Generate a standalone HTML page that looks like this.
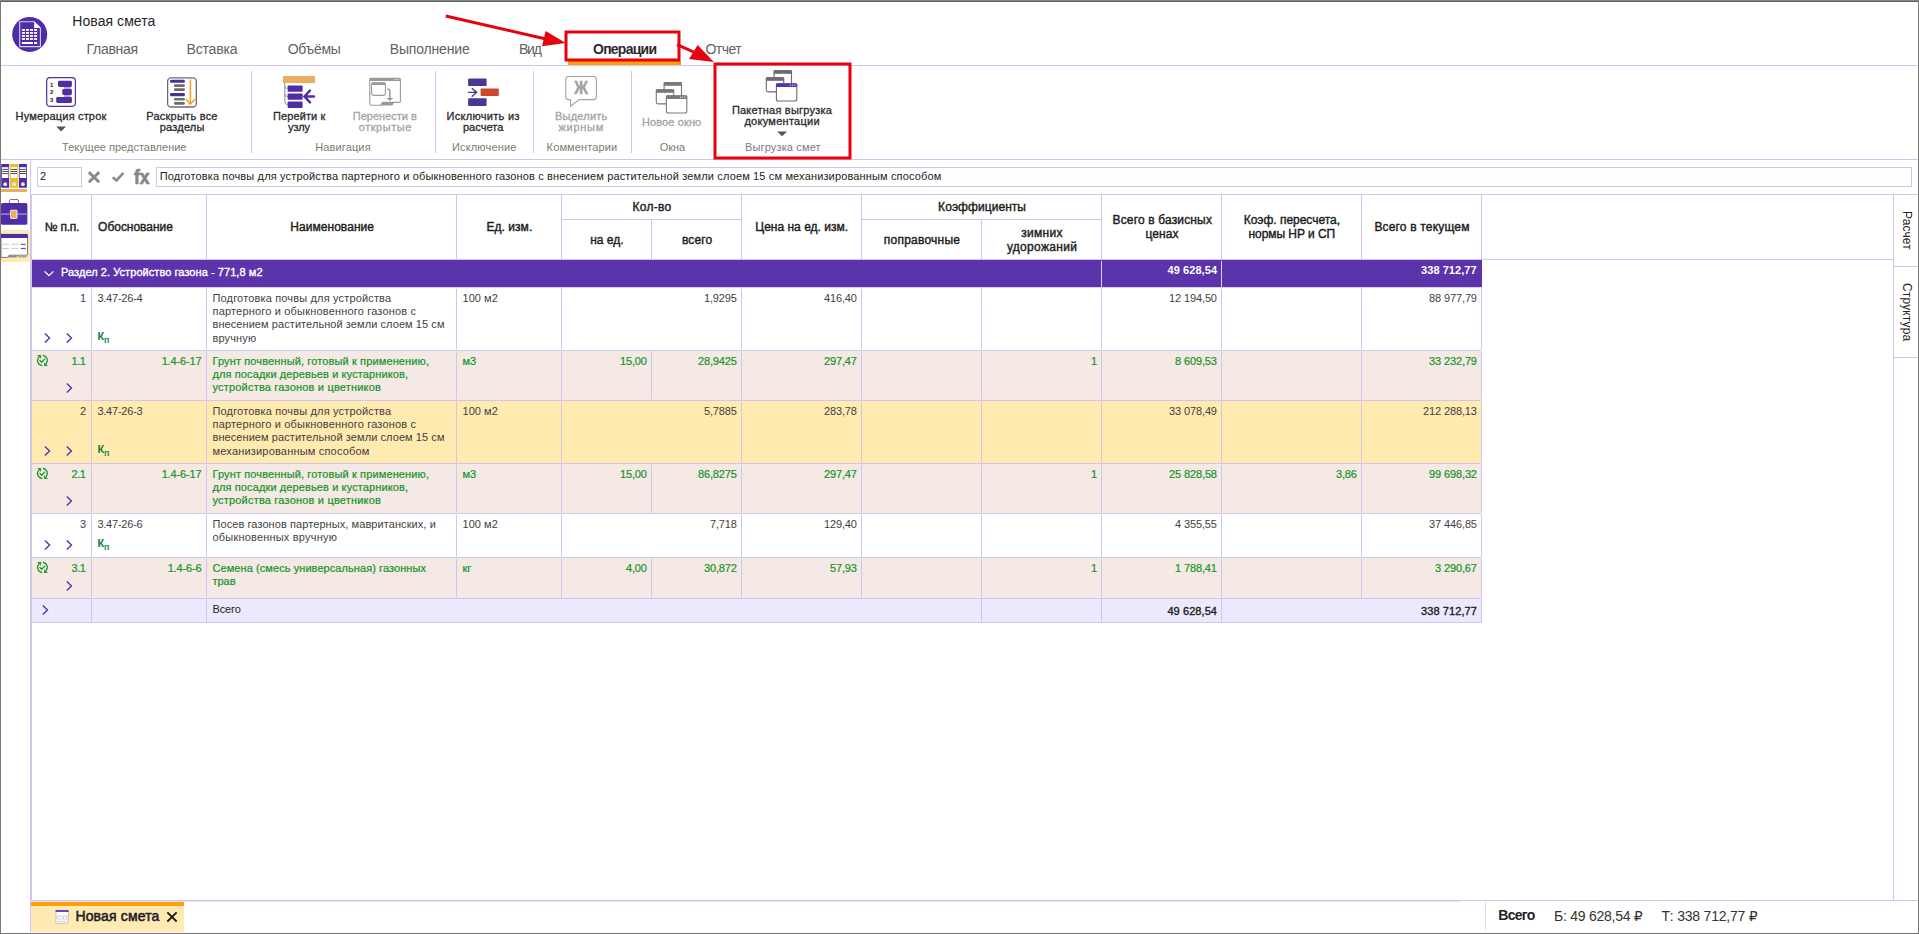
<!DOCTYPE html>
<html lang="ru"><head><meta charset="utf-8"><title>Новая смета</title>
<style>
*{box-sizing:border-box;margin:0;padding:0}
html,body{width:1919px;height:934px;overflow:hidden;background:#fff}
body{position:relative;font-family:"Liberation Sans","DejaVu Sans",sans-serif;color:#333;font-size:11px}
.a{position:absolute}
.t{position:absolute;white-space:nowrap;line-height:20px;height:20px}
.b{font-weight:bold}
.m{-webkit-text-stroke:0.35px currentColor}
.hl{position:absolute;height:1px;background:#d0c5ec}
.vl{position:absolute;width:1px;background:#d0c5ec}
.vg{box-shadow:0 1px 0 0 rgba(208,197,236,.45),0 -1px 0 0 rgba(208,197,236,.45)}
.tab{font-size:14px;color:#626262}
.rb{font-size:11px;color:#2a2a2a;-webkit-text-stroke:0.3px currentColor}
.rbd{font-size:11px;color:#a4a4a4;-webkit-text-stroke:0.3px currentColor}
.gl{font-size:11px;color:#7a7a7a}
.th{font-size:12px;color:#1c1c1c;-webkit-text-stroke:0.4px currentColor}
.d{font-size:11px;color:#3f3f3f}
.g{font-size:11px;color:#17952a;-webkit-text-stroke:0.22px currentColor}
svg{position:absolute;overflow:visible}
</style></head>
<body>
<div class="a" style="left:0;top:0;width:1px;height:934px;background:#787878"></div>
<div class="a" style="left:1918px;top:0;width:1px;height:934px;background:#787878"></div>
<div class="a" style="left:0;top:0;width:1919px;height:1px;background:#868686"></div>
<div class="a" style="left:1px;top:1px;width:1917px;height:1px;background:#5d5e62"></div>
<div class="a" style="left:0;top:933px;width:1919px;height:1px;background:#717171"></div>
<div class="t" style="left:72.30px;top:11.0px;font-size:14px;letter-spacing:0.058px;color:#262626">Новая смета</div>
<div class="t tab" style="left:86.50px;top:39.0px;letter-spacing:-0.283px">Главная</div>
<div class="t tab" style="left:186.50px;top:39.0px;letter-spacing:-0.174px">Вставка</div>
<div class="t tab" style="left:287.75px;top:39.0px;letter-spacing:-0.304px">Объёмы</div>
<div class="t tab" style="left:389.75px;top:39.0px;letter-spacing:-0.165px">Выполнение</div>
<div class="t tab" style="left:518.90px;top:39.0px;letter-spacing:-1.114px">Вид</div>
<div class="t tab" style="left:705.50px;top:39.0px;letter-spacing:-0.536px">Отчет</div>
<div class="t  b" style="left:593.00px;top:39.0px;font-size:14px;letter-spacing:-0.757px;color:#2b2b2b">Операции</div>
<div class="hl" style="left:1px;top:65px;width:1917px"></div>
<div class="hl" style="left:1px;top:159px;width:1917px"></div>
<div class="vl" style="left:251px;top:71px;height:82px"></div>
<div class="vl" style="left:435px;top:71px;height:82px"></div>
<div class="vl" style="left:533px;top:71px;height:82px"></div>
<div class="vl" style="left:631px;top:71px;height:82px"></div>
<div class="a" style="left:568px;top:61px;width:113px;height:4px;background:#ff9f0a"></div>
<div class="t rb" style="left:15.60px;top:106.0px;letter-spacing:0.169px">Нумерация строк</div>
<div class="t rb" style="left:146.25px;top:106.0px;letter-spacing:0.241px">Раскрыть все</div>
<div class="t rb" style="left:159.75px;top:117.0px;letter-spacing:0.205px">разделы</div>
<div class="t rb" style="left:273.10px;top:106.0px;letter-spacing:0.085px">Перейти к</div>
<div class="t rb" style="left:288.10px;top:117.0px;letter-spacing:-0.148px">узлу</div>
<div class="t rbd" style="left:352.75px;top:106.0px;letter-spacing:0.010px">Перенести в</div>
<div class="t rbd" style="left:358.75px;top:117.0px;letter-spacing:0.527px">открытые</div>
<div class="t rb" style="left:446.60px;top:106.0px;letter-spacing:0.293px">Исключить из</div>
<div class="t rb" style="left:462.90px;top:117.0px;letter-spacing:0.077px">расчета</div>
<div class="t rbd" style="left:555.00px;top:106.0px;letter-spacing:0.214px">Выделить</div>
<div class="t rbd" style="left:558.50px;top:117.0px;letter-spacing:0.716px">жирным</div>
<div class="t rbd" style="left:641.90px;top:112.0px;letter-spacing:0.127px">Новое окно</div>
<div class="t rb" style="left:731.90px;top:100.0px;letter-spacing:0.223px">Пакетная выгрузка</div>
<div class="t rb" style="left:744.40px;top:111.0px;letter-spacing:0.270px">документации</div>
<div class="t gl" style="left:62.10px;top:137.0px;letter-spacing:0.008px">Текущее представление</div>
<div class="t gl" style="left:315.25px;top:137.0px;letter-spacing:0.126px">Навигация</div>
<div class="t gl" style="left:451.90px;top:137.0px;letter-spacing:0.170px">Исключение</div>
<div class="t gl" style="left:546.60px;top:137.0px;letter-spacing:0.135px">Комментарии</div>
<div class="t gl" style="left:659.75px;top:137.0px;letter-spacing:-0.104px">Окна</div>
<div class="t gl" style="left:745.00px;top:137.0px;letter-spacing:0.144px">Выгрузка смет</div>
<div class="a" style="left:37px;top:167px;width:45px;height:20px;border:1px solid #d0c5ec"></div>
<div class="t" style="left:40.10px;top:166.0px;font-size:11px;color:#222">2</div>
<div class="a" style="left:156px;top:167px;width:1756px;height:20px;border:1px solid #d0c5ec"></div>
<div class="t" style="left:159.80px;top:166.0px;font-size:11px;letter-spacing:0.147px;color:#222">Подготовка почвы для устройства партерного и обыкновенного газонов с внесением растительной земли слоем 15 см механизированным способом</div>
<div class="t b" style="left:133.6px;top:166.5px;font-size:20px;color:#868686;-webkit-text-stroke:0.7px #868686;transform:scaleX(0.88);transform-origin:0 0">fx</div>
<div class="vl" style="left:30px;top:160px;height:772px"></div>
<div class="vl" style="left:31px;top:194px;height:707px"></div>
<div class="hl" style="left:31px;top:194px;width:1887px"></div>
<div class="hl" style="left:31px;top:900px;width:1887px"></div>
<div class="vl" style="left:1893px;top:195px;height:706px"></div>
<div class="hl" style="left:1894px;top:266px;width:24px"></div>
<div class="hl" style="left:1894px;top:357px;width:24px"></div>
<div class="a" style="left:32px;top:351px;width:1449px;height:49px;background:#f5e9e6"></div>
<div class="a" style="left:32px;top:401px;width:1449px;height:62px;background:#ffeab0"></div>
<div class="a" style="left:32px;top:464px;width:1449px;height:49px;background:#f5e9e6"></div>
<div class="a" style="left:32px;top:558px;width:1449px;height:40px;background:#f5e9e6"></div>
<div class="a" style="left:32px;top:599px;width:1449px;height:23px;background:#ece8fd"></div>
<div class="hl" style="left:31px;top:259px;width:1862px"></div>
<div class="a" style="left:32px;top:260px;width:1450px;height:27px;background:#5b34ac"></div>
<div class="hl" style="left:31px;top:350px;width:1451px"></div>
<div class="hl" style="left:31px;top:400px;width:1451px"></div>
<div class="hl" style="left:31px;top:463px;width:1451px"></div>
<div class="hl" style="left:31px;top:513px;width:1451px"></div>
<div class="hl" style="left:31px;top:557px;width:1451px"></div>
<div class="hl" style="left:31px;top:598px;width:1451px"></div>
<div class="hl" style="left:31px;top:622px;width:1451px"></div>
<div class="hl" style="left:561px;top:219px;width:180px"></div>
<div class="hl" style="left:861px;top:219px;width:240px"></div>
<div class="vl" style="left:91px;top:195px;height:64px"></div>
<div class="vl" style="left:206px;top:195px;height:64px"></div>
<div class="vl" style="left:456px;top:195px;height:64px"></div>
<div class="vl" style="left:561px;top:195px;height:64px"></div>
<div class="vl" style="left:651px;top:220px;height:39px"></div>
<div class="vl" style="left:741px;top:195px;height:64px"></div>
<div class="vl" style="left:861px;top:195px;height:64px"></div>
<div class="vl" style="left:981px;top:220px;height:39px"></div>
<div class="vl" style="left:1101px;top:195px;height:64px"></div>
<div class="vl" style="left:1221px;top:195px;height:64px"></div>
<div class="vl" style="left:1361px;top:195px;height:64px"></div>
<div class="vl" style="left:1481px;top:195px;height:64px"></div>
<div class="vl" style="left:1101px;top:261px;height:26px;background:#d9d0f2"></div>
<div class="vl" style="left:1221px;top:261px;height:26px;background:#d9d0f2"></div>
<div class="hl" style="left:32px;top:287px;width:1450px;background:#ddd4f3"></div>
<div class="vl vg" style="left:91px;top:289px;height:60px"></div>
<div class="vl vg" style="left:206px;top:289px;height:60px"></div>
<div class="vl vg" style="left:456px;top:289px;height:60px"></div>
<div class="vl vg" style="left:561px;top:289px;height:60px"></div>
<div class="vl vg" style="left:741px;top:289px;height:60px"></div>
<div class="vl vg" style="left:861px;top:289px;height:60px"></div>
<div class="vl vg" style="left:981px;top:289px;height:60px"></div>
<div class="vl vg" style="left:1101px;top:289px;height:60px"></div>
<div class="vl vg" style="left:1221px;top:289px;height:60px"></div>
<div class="vl vg" style="left:1361px;top:289px;height:60px"></div>
<div class="vl vg" style="left:1481px;top:289px;height:60px"></div>
<div class="vl vg" style="left:91px;top:352px;height:47px"></div>
<div class="vl vg" style="left:206px;top:352px;height:47px"></div>
<div class="vl vg" style="left:456px;top:352px;height:47px"></div>
<div class="vl vg" style="left:561px;top:352px;height:47px"></div>
<div class="vl vg" style="left:651px;top:352px;height:47px"></div>
<div class="vl vg" style="left:741px;top:352px;height:47px"></div>
<div class="vl vg" style="left:861px;top:352px;height:47px"></div>
<div class="vl vg" style="left:981px;top:352px;height:47px"></div>
<div class="vl vg" style="left:1101px;top:352px;height:47px"></div>
<div class="vl vg" style="left:1221px;top:352px;height:47px"></div>
<div class="vl vg" style="left:1361px;top:352px;height:47px"></div>
<div class="vl vg" style="left:1481px;top:352px;height:47px"></div>
<div class="vl vg" style="left:91px;top:402px;height:60px"></div>
<div class="vl vg" style="left:206px;top:402px;height:60px"></div>
<div class="vl vg" style="left:456px;top:402px;height:60px"></div>
<div class="vl vg" style="left:561px;top:402px;height:60px"></div>
<div class="vl vg" style="left:741px;top:402px;height:60px"></div>
<div class="vl vg" style="left:861px;top:402px;height:60px"></div>
<div class="vl vg" style="left:981px;top:402px;height:60px"></div>
<div class="vl vg" style="left:1101px;top:402px;height:60px"></div>
<div class="vl vg" style="left:1221px;top:402px;height:60px"></div>
<div class="vl vg" style="left:1361px;top:402px;height:60px"></div>
<div class="vl vg" style="left:1481px;top:402px;height:60px"></div>
<div class="vl vg" style="left:91px;top:465px;height:47px"></div>
<div class="vl vg" style="left:206px;top:465px;height:47px"></div>
<div class="vl vg" style="left:456px;top:465px;height:47px"></div>
<div class="vl vg" style="left:561px;top:465px;height:47px"></div>
<div class="vl vg" style="left:651px;top:465px;height:47px"></div>
<div class="vl vg" style="left:741px;top:465px;height:47px"></div>
<div class="vl vg" style="left:861px;top:465px;height:47px"></div>
<div class="vl vg" style="left:981px;top:465px;height:47px"></div>
<div class="vl vg" style="left:1101px;top:465px;height:47px"></div>
<div class="vl vg" style="left:1221px;top:465px;height:47px"></div>
<div class="vl vg" style="left:1361px;top:465px;height:47px"></div>
<div class="vl vg" style="left:1481px;top:465px;height:47px"></div>
<div class="vl vg" style="left:91px;top:515px;height:41px"></div>
<div class="vl vg" style="left:206px;top:515px;height:41px"></div>
<div class="vl vg" style="left:456px;top:515px;height:41px"></div>
<div class="vl vg" style="left:561px;top:515px;height:41px"></div>
<div class="vl vg" style="left:741px;top:515px;height:41px"></div>
<div class="vl vg" style="left:861px;top:515px;height:41px"></div>
<div class="vl vg" style="left:981px;top:515px;height:41px"></div>
<div class="vl vg" style="left:1101px;top:515px;height:41px"></div>
<div class="vl vg" style="left:1221px;top:515px;height:41px"></div>
<div class="vl vg" style="left:1361px;top:515px;height:41px"></div>
<div class="vl vg" style="left:1481px;top:515px;height:41px"></div>
<div class="vl vg" style="left:91px;top:559px;height:38px"></div>
<div class="vl vg" style="left:206px;top:559px;height:38px"></div>
<div class="vl vg" style="left:456px;top:559px;height:38px"></div>
<div class="vl vg" style="left:561px;top:559px;height:38px"></div>
<div class="vl vg" style="left:651px;top:559px;height:38px"></div>
<div class="vl vg" style="left:741px;top:559px;height:38px"></div>
<div class="vl vg" style="left:861px;top:559px;height:38px"></div>
<div class="vl vg" style="left:981px;top:559px;height:38px"></div>
<div class="vl vg" style="left:1101px;top:559px;height:38px"></div>
<div class="vl vg" style="left:1221px;top:559px;height:38px"></div>
<div class="vl vg" style="left:1361px;top:559px;height:38px"></div>
<div class="vl vg" style="left:1481px;top:559px;height:38px"></div>
<div class="vl" style="left:91px;top:599px;height:23px"></div>
<div class="vl" style="left:206px;top:599px;height:23px"></div>
<div class="vl" style="left:981px;top:599px;height:23px"></div>
<div class="vl" style="left:1101px;top:599px;height:23px"></div>
<div class="vl" style="left:1221px;top:599px;height:23px"></div>
<div class="vl" style="left:1481px;top:599px;height:23px"></div>
<div class="t th" style="left:44.75px;top:217.0px;letter-spacing:-0.245px">№ п.п.</div>
<div class="t th" style="left:98.10px;top:217.0px;letter-spacing:-0.031px">Обоснование</div>
<div class="t th" style="left:290.25px;top:217.0px;letter-spacing:0.051px">Наименование</div>
<div class="t th" style="left:486.50px;top:217.0px;letter-spacing:0.040px">Ед. изм.</div>
<div class="t th" style="left:632.50px;top:197.0px;letter-spacing:0.287px">Кол-во</div>
<div class="t th" style="left:590.25px;top:230.0px;letter-spacing:-0.028px">на ед.</div>
<div class="t th" style="left:681.90px;top:230.0px;letter-spacing:0.162px">всего</div>
<div class="t th" style="left:755.25px;top:217.0px;letter-spacing:0.010px">Цена на ед. изм.</div>
<div class="t th" style="left:938.10px;top:197.0px;letter-spacing:0.061px">Коэффициенты</div>
<div class="t th" style="left:883.75px;top:230.0px;letter-spacing:0.239px">поправочные</div>
<div class="t th" style="left:1021.25px;top:223.0px;letter-spacing:0.291px">зимних</div>
<div class="t th" style="left:1006.90px;top:237.0px;letter-spacing:0.307px">удорожаний</div>
<div class="t th" style="left:1112.50px;top:210.0px;letter-spacing:0.153px">Всего в базисных</div>
<div class="t th" style="left:1145.60px;top:224.0px;letter-spacing:0.020px">ценах</div>
<div class="t th" style="left:1243.75px;top:210.0px;letter-spacing:-0.024px">Коэф. пересчета,</div>
<div class="t th" style="left:1248.50px;top:224.0px;letter-spacing:-0.064px">нормы НР и СП</div>
<div class="t th" style="left:1374.40px;top:217.0px;letter-spacing:0.172px">Всего в текущем</div>
<div class="t m" style="left:61.00px;top:262.0px;font-size:11px;letter-spacing:0.060px;color:#fff">Раздел 2. Устройство газона - 771,8 м2</div>
<div class="t  b" style="left:1167.60px;top:260.0px;font-size:11px;letter-spacing:0.058px;color:#fff">49 628,54</div>
<div class="t  b" style="left:1421.10px;top:260.0px;font-size:11px;letter-spacing:0.049px;color:#fff">338 712,77</div>
<div class="t d" style="left:79.88px;top:288.0px">1</div>
<div class="t d" style="left:97.40px;top:288.0px;letter-spacing:-0.224px">3.47-26-4</div>
<div class="t d" style="left:212.50px;top:288.0px;letter-spacing:0.159px">Подготовка почвы для устройства</div>
<div class="t d" style="left:212.50px;top:301.0px;letter-spacing:0.182px">партерного и обыкновенного газонов с</div>
<div class="t d" style="left:212.50px;top:314.0px;letter-spacing:0.071px">внесением растительной земли слоем 15 см</div>
<div class="t d" style="left:212.50px;top:328.0px;letter-spacing:0.132px">вручную</div>
<div class="t d" style="left:462.50px;top:288.0px;letter-spacing:0.050px">100 м2</div>
<div class="t d" style="left:703.94px;top:288.0px;letter-spacing:-0.120px">1,9295</div>
<div class="t d" style="left:823.94px;top:288.0px;letter-spacing:-0.120px">416,40</div>
<div class="t d" style="left:1169.02px;top:288.0px;letter-spacing:-0.120px">12 194,50</div>
<div class="t d" style="left:1429.02px;top:288.0px;letter-spacing:-0.120px">88 977,79</div>
<div class="t g" style="left:71.50px;top:351.0px;letter-spacing:-0.400px">1.1</div>
<div class="t g" style="left:161.67px;top:351.0px;letter-spacing:-0.150px">1.4-6-17</div>
<div class="t g" style="left:212.50px;top:351.0px;letter-spacing:0.126px">Грунт почвенный, готовый к применению,</div>
<div class="t g" style="left:212.50px;top:364.0px;letter-spacing:0.112px">для посадки деревьев и кустарников,</div>
<div class="t g" style="left:212.50px;top:377.0px;letter-spacing:0.195px">устройства газонов и цветников</div>
<div class="t g" style="left:462.50px;top:351.0px;letter-spacing:0.050px">м3</div>
<div class="t g" style="left:619.95px;top:351.0px;letter-spacing:-0.120px">15,00</div>
<div class="t g" style="left:697.95px;top:351.0px;letter-spacing:-0.120px">28,9425</div>
<div class="t g" style="left:823.94px;top:351.0px;letter-spacing:-0.120px">297,47</div>
<div class="t g" style="left:1090.88px;top:351.0px;letter-spacing:-0.120px">1</div>
<div class="t g" style="left:1175.01px;top:351.0px;letter-spacing:-0.120px">8 609,53</div>
<div class="t g" style="left:1429.02px;top:351.0px;letter-spacing:-0.120px">33 232,79</div>
<div class="t d" style="left:79.88px;top:401.0px">2</div>
<div class="t d" style="left:97.40px;top:401.0px;letter-spacing:-0.224px">3.47-26-3</div>
<div class="t d" style="left:212.50px;top:401.0px;letter-spacing:0.159px">Подготовка почвы для устройства</div>
<div class="t d" style="left:212.50px;top:414.0px;letter-spacing:0.182px">партерного и обыкновенного газонов с</div>
<div class="t d" style="left:212.50px;top:427.0px;letter-spacing:0.071px">внесением растительной земли слоем 15 см</div>
<div class="t d" style="left:212.50px;top:441.0px;letter-spacing:0.188px">механизированным способом</div>
<div class="t d" style="left:462.50px;top:401.0px;letter-spacing:0.050px">100 м2</div>
<div class="t d" style="left:703.94px;top:401.0px;letter-spacing:-0.120px">5,7885</div>
<div class="t d" style="left:823.94px;top:401.0px;letter-spacing:-0.120px">283,78</div>
<div class="t d" style="left:1169.02px;top:401.0px;letter-spacing:-0.120px">33 078,49</div>
<div class="t d" style="left:1423.02px;top:401.0px;letter-spacing:-0.120px">212 288,13</div>
<div class="t g" style="left:71.50px;top:464.0px;letter-spacing:-0.400px">2.1</div>
<div class="t g" style="left:161.67px;top:464.0px;letter-spacing:-0.150px">1.4-6-17</div>
<div class="t g" style="left:212.50px;top:464.0px;letter-spacing:0.126px">Грунт почвенный, готовый к применению,</div>
<div class="t g" style="left:212.50px;top:477.0px;letter-spacing:0.112px">для посадки деревьев и кустарников,</div>
<div class="t g" style="left:212.50px;top:490.0px;letter-spacing:0.195px">устройства газонов и цветников</div>
<div class="t g" style="left:462.50px;top:464.0px;letter-spacing:0.050px">м3</div>
<div class="t g" style="left:619.95px;top:464.0px;letter-spacing:-0.120px">15,00</div>
<div class="t g" style="left:697.95px;top:464.0px;letter-spacing:-0.120px">86,8275</div>
<div class="t g" style="left:823.94px;top:464.0px;letter-spacing:-0.120px">297,47</div>
<div class="t g" style="left:1090.88px;top:464.0px;letter-spacing:-0.120px">1</div>
<div class="t g" style="left:1169.02px;top:464.0px;letter-spacing:-0.120px">25 828,58</div>
<div class="t g" style="left:1335.94px;top:464.0px;letter-spacing:-0.120px">3,86</div>
<div class="t g" style="left:1429.02px;top:464.0px;letter-spacing:-0.120px">99 698,32</div>
<div class="t d" style="left:79.88px;top:514.0px">3</div>
<div class="t d" style="left:97.40px;top:514.0px;letter-spacing:-0.224px">3.47-26-6</div>
<div class="t d" style="left:212.50px;top:514.0px;letter-spacing:0.078px">Посев газонов партерных, мавританских, и</div>
<div class="t d" style="left:212.50px;top:527.0px;letter-spacing:0.195px">обыкновенных вручную</div>
<div class="t d" style="left:462.50px;top:514.0px;letter-spacing:0.050px">100 м2</div>
<div class="t d" style="left:709.95px;top:514.0px;letter-spacing:-0.120px">7,718</div>
<div class="t d" style="left:823.94px;top:514.0px;letter-spacing:-0.120px">129,40</div>
<div class="t d" style="left:1175.01px;top:514.0px;letter-spacing:-0.120px">4 355,55</div>
<div class="t d" style="left:1429.02px;top:514.0px;letter-spacing:-0.120px">37 446,85</div>
<div class="t g" style="left:71.50px;top:558.0px;letter-spacing:-0.400px">3.1</div>
<div class="t g" style="left:167.64px;top:558.0px;letter-spacing:-0.150px">1.4-6-6</div>
<div class="t g" style="left:212.50px;top:558.0px;letter-spacing:0.075px">Семена (смесь универсальная) газонных</div>
<div class="t g" style="left:212.50px;top:571.0px;letter-spacing:-0.042px">трав</div>
<div class="t g" style="left:462.50px;top:558.0px;letter-spacing:0.050px">кг</div>
<div class="t g" style="left:625.94px;top:558.0px;letter-spacing:-0.120px">4,00</div>
<div class="t g" style="left:703.94px;top:558.0px;letter-spacing:-0.120px">30,872</div>
<div class="t g" style="left:829.95px;top:558.0px;letter-spacing:-0.120px">57,93</div>
<div class="t g" style="left:1090.88px;top:558.0px;letter-spacing:-0.120px">1</div>
<div class="t g" style="left:1175.01px;top:558.0px;letter-spacing:-0.120px">1 788,41</div>
<div class="t g" style="left:1435.01px;top:558.0px;letter-spacing:-0.120px">3 290,67</div>
<div class="t" style="left:212.50px;top:599.0px;font-size:11px;letter-spacing:-0.111px;color:#222">Всего</div>
<div class="t m" style="left:1167.40px;top:601.0px;font-size:11px;letter-spacing:0.083px;color:#1c1c1c">49 628,54</div>
<div class="t m" style="left:1421.00px;top:601.0px;font-size:11px;letter-spacing:0.093px;color:#1c1c1c">338 712,77</div>
<div class="t  b" style="left:97.40px;top:326.0px;font-size:11px;color:#0f7f3b">К</div>
<div class="t  b" style="left:103.90px;top:330.0px;font-size:9px;color:#2a8f52">п</div>
<div class="t  b" style="left:97.40px;top:439.0px;font-size:11px;color:#0f7f3b">К</div>
<div class="t  b" style="left:103.90px;top:443.0px;font-size:9px;color:#2a8f52">п</div>
<div class="t  b" style="left:97.40px;top:533.0px;font-size:11px;color:#0f7f3b">К</div>
<div class="t  b" style="left:103.90px;top:537.0px;font-size:9px;color:#2a8f52">п</div>
<div class="a" style="left:1899px;top:210.5px;font-size:12px;line-height:15px;color:#222;writing-mode:vertical-rl;white-space:nowrap;letter-spacing:0.1px">Расчет</div>
<div class="a" style="left:1899px;top:282.5px;font-size:12px;line-height:15px;color:#222;writing-mode:vertical-rl;white-space:nowrap;letter-spacing:0.15px">Структура</div>
<div class="hl" style="left:32px;top:901px;width:1428px;background:#e6e6ea"></div>
<div class="a" style="left:31px;top:902px;width:153px;height:30px;background:#feeab2"></div>
<div class="a" style="left:31px;top:902px;width:153px;height:4px;background:#ff9f0a"></div>
<div class="t" style="left:75.40px;top:906.0px;font-size:14px;letter-spacing:0.158px;color:#1e1e2a;-webkit-text-stroke:0.55px #1e1e2a">Новая смета</div>
<div class="vl" style="left:1485px;top:902px;height:28px;background:#dcdcdc"></div>
<div class="t  b" style="left:1498.25px;top:905.3px;font-size:14px;letter-spacing:-0.723px;color:#222">Всего</div>
<div class="t" style="left:1554.00px;top:906.0px;font-size:14px;letter-spacing:-0.254px;color:#333">Б: 49 628,54 ₽</div>
<div class="t" style="left:1661.50px;top:906.0px;font-size:14px;letter-spacing:-0.211px;color:#333">Т: 338 712,77 ₽</div>
<svg width="1919" height="934" viewBox="0 0 1919 934" style="left:0;top:0;pointer-events:none" font-family="Liberation Sans, sans-serif">
<circle cx="29.7" cy="34.4" r="17.5" fill="#4f2da6"/>
<path d="M19.7 21.7 H34.2 L40.4 28 V46.6 H19.7 Z" fill="none" stroke="#d9cff2" stroke-width="1.1"/>
<path d="M34.2 21.7 L40.4 28 H34.2 Z" fill="#fff"/>
<rect x="21.90" y="29.00" width="3.1" height="1.8" fill="#fff"/>
<rect x="25.93" y="29.00" width="3.1" height="1.8" fill="#fff"/>
<rect x="29.96" y="29.00" width="3.1" height="1.8" fill="#fff"/>
<rect x="33.99" y="29.00" width="3.1" height="1.8" fill="#fff"/>
<rect x="21.90" y="32.03" width="3.1" height="1.8" fill="#fff"/>
<rect x="25.93" y="32.03" width="3.1" height="1.8" fill="#fff"/>
<rect x="29.96" y="32.03" width="3.1" height="1.8" fill="#fff"/>
<rect x="33.99" y="32.03" width="3.1" height="1.8" fill="#fff"/>
<rect x="21.90" y="35.06" width="3.1" height="1.8" fill="#fff"/>
<rect x="25.93" y="35.06" width="3.1" height="1.8" fill="#fff"/>
<rect x="29.96" y="35.06" width="3.1" height="1.8" fill="#fff"/>
<rect x="33.99" y="35.06" width="3.1" height="1.8" fill="#fff"/>
<rect x="21.90" y="38.09" width="3.1" height="1.8" fill="#fff"/>
<rect x="25.93" y="38.09" width="3.1" height="1.8" fill="#fff"/>
<rect x="29.96" y="38.09" width="3.1" height="1.8" fill="#fff"/>
<rect x="33.99" y="38.09" width="3.1" height="1.8" fill="#fff"/>
<rect x="21.9" y="42" width="11.1" height="2" fill="#fff"/>
<rect x="34" y="42" width="3.1" height="2" fill="#fff"/>
<rect x="46.7" y="77.6" width="28.7" height="28.7" rx="3.2" fill="#fff" stroke="#4f2da6" stroke-width="1.2"/>
<rect x="64" y="85" width="6.6" height="14" fill="#b9a8e0"/>
<rect x="58" y="80.8" width="13.9" height="6.2" rx="1.4" fill="#4f2da6"/>
<rect x="62.3" y="88.9" width="9.6" height="6" rx="1.4" fill="#4f2da6"/>
<rect x="56.2" y="96.9" width="15.7" height="6" rx="1.4" fill="#4f2da6"/>
<text x="51.6" y="86.8" font-size="6" font-weight="bold" text-anchor="middle" fill="#111">1</text>
<text x="51.6" y="94" font-size="6" font-weight="bold" text-anchor="middle" fill="#111">2</text>
<text x="51.6" y="101.9" font-size="6" font-weight="bold" text-anchor="middle" fill="#111">3</text>
<path d="M56.2 126.4 H66 L61.1 131.4 Z" fill="#555"/>
<rect x="167.6" y="77.8" width="28.7" height="29.2" rx="3.6" fill="#fff" stroke="#6b6b72" stroke-width="1.3"/>
<rect x="170" y="79.7" width="14.9" height="3.1" rx="1.3" fill="#4a2f96"/>
<rect x="173.9" y="84.2" width="11.0" height="2.7" rx="1.3" fill="#6b6b72"/>
<rect x="173.9" y="88.3" width="11.0" height="2.7" rx="1.3" fill="#6b6b72"/>
<rect x="170" y="93" width="14.9" height="3.2" rx="1.3" fill="#4a2f96"/>
<rect x="173.9" y="97.9" width="11.0" height="2.7" rx="1.3" fill="#6b6b72"/>
<rect x="173.9" y="102" width="11.0" height="2.8" rx="1.3" fill="#6b6b72"/>
<path d="M190.4 80 V104.3 M186.3 99.6 L190.4 104.3 L194.6 99.6" fill="none" stroke="#f5a01e" stroke-width="1.5" stroke-linecap="round" stroke-linejoin="round"/>
<rect x="283" y="76" width="32" height="7" fill="#e8b05e"/>
<path d="M284.8 83 V101.5 Q284.8 104.6 287.6 104.6 M284.8 86.5 Q284.8 88.4 287.6 88.4 M284.8 94.6 Q284.8 96.5 287.6 96.5" fill="none" stroke="#8a8a8a" stroke-width="1"/>
<rect x="287.6" y="85.4" width="15" height="6.3" rx="0.8" fill="#4f2da6"/>
<rect x="287.6" y="93.5" width="15" height="6.3" rx="0.8" fill="#4f2da6"/>
<rect x="287.6" y="101.6" width="15" height="6.3" rx="0.8" fill="#4f2da6"/>
<path d="M314 96.5 H305.5 M310 90.6 L304.4 96.5 L310 102.4" fill="none" stroke="#4f2da6" stroke-width="2.4" stroke-linecap="round" stroke-linejoin="miter"/>
<path d="M371 78.4 H399.2 Q400.4 78.4 400.4 79.6 V101.2 Q400.4 102.4 399.2 102.4 H382.6 L380.8 105.3 H371 Q369.8 105.3 369.8 104.1 V79.6 Q369.8 78.4 371 78.4 Z" fill="#fff" stroke="#9a9a9a" stroke-width="1.1"/>
<rect x="369.8" y="78" width="30.6" height="2.9" rx="1" fill="#9a9a9a"/>
<rect x="394.2" y="79" width="0.9" height="0.9" fill="#fff"/>
<rect x="396.4" y="79" width="0.9" height="0.9" fill="#fff"/>
<rect x="398.4" y="79" width="0.9" height="0.9" fill="#fff"/>
<path d="M382.4 102.4 H393.8 Q393.2 105.6 390.6 105.6 H380.6 Z" fill="#9a9a9a"/>
<rect x="371.6" y="82.8" width="13.8" height="12.6" rx="1.8" fill="#fff" stroke="#9a9a9a" stroke-width="1.1"/>
<rect x="371.6" y="82.6" width="13.8" height="2.5" rx="0.9" fill="#9a9a9a"/>
<path d="M387.4 89 Q389.9 89 389.9 91.4 V98.4" fill="none" stroke="#9a9a9a" stroke-width="1.5"/>
<path d="M386.6 98 H393.2 L389.9 101 Z" fill="#9a9a9a"/>
<rect x="468.1" y="78.5" width="18.5" height="7.6" rx="0.9" fill="#4b3793"/>
<rect x="468.1" y="98.2" width="18.5" height="7.7" rx="0.9" fill="#4b3793"/>
<rect x="480.6" y="88.6" width="18.2" height="7.4" rx="0.9" fill="#cf472c"/>
<path d="M468.4 92.35 H476.6 M472.2 88.5 L476.7 92.35 L472.2 96.3" fill="none" stroke="#4b3793" stroke-width="1.4" stroke-linecap="round" stroke-linejoin="miter"/>
<path d="M568.6 76.5 H593.6 Q596.4 76.5 596.4 79.3 V96.8 Q596.4 99.6 593.6 99.6 H579.2 L570.6 106.3 V99.6 H568.6 Q565.8 99.6 565.8 96.8 V79.3 Q565.8 76.5 568.6 76.5 Z" fill="#fff" stroke="#a3a3a3" stroke-width="1.1"/>
<text x="581.1" y="94.3" font-size="18" font-weight="bold" text-anchor="middle" fill="#a3a3a3" stroke="#a3a3a3" stroke-width="0.5" transform="translate(581.1 0) scale(0.84 1) translate(-581.1 0)">Ж</text>
<g fill="#fff" stroke="#7a7a7a" stroke-width="1.1"><rect x="664.1" y="82.8" width="17.4" height="14.5" rx="1.6"/><rect x="664.1" y="82.6" width="17.4" height="2.6" rx="0.8" fill="#7a7a7a"/><rect x="656.3" y="89.9" width="17.4" height="14.0" rx="1.8"/><rect x="656.3" y="89.7" width="17.4" height="2.6" rx="0.8" fill="#7a7a7a"/><rect x="666.4" y="96.0" width="20.4" height="17" rx="2"/><rect x="666.4" y="95.8" width="20.4" height="2.7" rx="0.9" fill="#7a7a7a" stroke="#7a7a7a"/></g><rect x="679.9" y="96.7" width="1.1" height="0.9" fill="#fff"/><rect x="682.1" y="96.7" width="1.1" height="0.9" fill="#fff"/><rect x="684.3" y="96.7" width="1.1" height="0.9" fill="#fff"/>
<g fill="#fff" stroke="#6b6b72" stroke-width="1.1"><rect x="774.1" y="70.8" width="17.4" height="14.5" rx="1.6"/><rect x="774.1" y="70.6" width="17.4" height="2.6" rx="0.8" fill="#6b6b72"/><rect x="766.3" y="77.9" width="17.4" height="14.0" rx="1.8"/><rect x="766.3" y="77.7" width="17.4" height="2.6" rx="0.8" fill="#6b6b72"/><rect x="776.4" y="84.0" width="20.4" height="17" rx="2"/><rect x="776.4" y="83.8" width="20.4" height="2.7" rx="0.9" fill="#5b33ab" stroke="#5b33ab"/></g><rect x="789.9" y="84.7" width="1.1" height="0.9" fill="#fff"/><rect x="792.1" y="84.7" width="1.1" height="0.9" fill="#fff"/><rect x="794.3" y="84.7" width="1.1" height="0.9" fill="#fff"/>
<path d="M777.2 131.4 H787 L782.1 136.2 Z" fill="#555"/>
<path d="M88.8 172.1 L99.2 182.3 M99.2 172.1 L88.8 182.3" fill="none" stroke="#8a8a8a" stroke-width="2.9"/>
<path d="M112.7 177.2 L116.6 180.4 L123.3 172.9" fill="none" stroke="#8a8a8a" stroke-width="2.5"/>
<rect x="1.2" y="164" width="8" height="23.8" rx="0.6" fill="#4f2da6"/>
<rect x="2.0" y="167.2" width="6.4" height="10.8" fill="#fff"/>
<rect x="2.2" y="168.95000000000002" width="6" height="0.9" fill="#3a3a3a"/>
<rect x="2.2" y="171.05" width="6" height="0.9" fill="#3a3a3a"/>
<rect x="2.2" y="173.15" width="6" height="0.9" fill="#3a3a3a"/>
<circle cx="5.2" cy="184.2" r="1.9" fill="#ece9e4"/>
<rect x="10.1" y="164" width="8" height="23.8" rx="0.6" fill="#e9bf25"/>
<rect x="10.9" y="167.2" width="6.4" height="10.8" fill="#fff"/>
<rect x="11.1" y="168.95000000000002" width="6" height="0.9" fill="#3a3a3a"/>
<rect x="11.1" y="171.05" width="6" height="0.9" fill="#3a3a3a"/>
<rect x="11.1" y="173.15" width="6" height="0.9" fill="#3a3a3a"/>
<circle cx="14.1" cy="184.2" r="1.9" fill="#ece9e4"/>
<rect x="18.9" y="164" width="8" height="23.8" rx="0.6" fill="#4f2da6"/>
<rect x="19.7" y="167.2" width="6.4" height="10.8" fill="#fff"/>
<rect x="19.9" y="168.95000000000002" width="6" height="0.9" fill="#3a3a3a"/>
<rect x="19.9" y="171.05" width="6" height="0.9" fill="#3a3a3a"/>
<rect x="19.9" y="173.15" width="6" height="0.9" fill="#3a3a3a"/>
<circle cx="22.9" cy="184.2" r="1.9" fill="#ece9e4"/>
<rect x="1" y="189" width="26" height="3" fill="#e8b05e"/>
<path d="M9.3 203.2 V201 Q9.3 199.5 10.8 199.5 H17 Q18.5 199.5 18.5 201 V203.2" fill="none" stroke="#777" stroke-width="1"/>
<rect x="1" y="203.1" width="26.4" height="21.7" rx="1.6" fill="#4f2da6"/>
<rect x="1" y="213.5" width="26.4" height="1.2" fill="#b09ddc"/>
<rect x="10.2" y="209.8" width="7.2" height="9.2" rx="1.4" fill="#fff"/>
<rect x="11" y="210.6" width="5.6" height="7.6" rx="0.8" fill="#e8b05e"/>
<rect x="1" y="230.1" width="28.8" height="31.9" rx="2.5" fill="#ffeab0"/>
<path d="M1 234.4 H26.6 Q27.6 234.4 27.6 235.4 V254 Q27.6 255.2 26.6 255.2 H9 L8 257.4 H1 Z" fill="#fff" stroke="#6b6b72" stroke-width="0.9"/>
<path d="M1 234 H26.4 Q27.8 234 27.8 235.4 V238 H1 Z" fill="#4f2da6"/>
<rect x="9" y="255.6" width="7.8" height="2" rx="0.6" fill="#8a8a90"/>
<rect x="18" y="255.6" width="8.8" height="2" rx="0.6" fill="#a8a6aa"/>
<rect x="2.2" y="243.8" width="6.8" height="1" fill="#c9c9c9"/>
<rect x="11.4" y="243.8" width="7" height="1" fill="#c9c9c9"/>
<rect x="20.8" y="243.8" width="5" height="1.1" fill="#6a46b8"/>
<rect x="2.2" y="247.9" width="6.8" height="1" fill="#c9c9c9"/>
<rect x="11.4" y="247.9" width="7" height="1" fill="#c9c9c9"/>
<rect x="20.8" y="247.9" width="5" height="1.1" fill="#6a46b8"/>
<path d="M44.6 271.4 L49 275.6 L53.4 271.4" fill="none" stroke="#fff" stroke-width="1.3"/>
<path d="M44.9 333.4 L49.6 337.9 L44.9 342.4" fill="none" stroke="#5230a8" stroke-width="1.35"/>
<path d="M66.8 333.4 L71.5 337.9 L66.8 342.4" fill="none" stroke="#5230a8" stroke-width="1.35"/>
<path d="M44.9 446.4 L49.6 450.9 L44.9 455.4" fill="none" stroke="#5230a8" stroke-width="1.35"/>
<path d="M66.8 446.4 L71.5 450.9 L66.8 455.4" fill="none" stroke="#5230a8" stroke-width="1.35"/>
<path d="M44.9 540.4 L49.6 544.9 L44.9 549.4" fill="none" stroke="#5230a8" stroke-width="1.35"/>
<path d="M66.8 540.4 L71.5 544.9 L66.8 549.4" fill="none" stroke="#5230a8" stroke-width="1.35"/>
<path d="M66.8 383.4 L71.5 387.9 L66.8 392.4" fill="none" stroke="#5230a8" stroke-width="1.35"/>
<path d="M66.8 496.4 L71.5 500.9 L66.8 505.4" fill="none" stroke="#5230a8" stroke-width="1.35"/>
<path d="M66.8 581.4 L71.5 585.9 L66.8 590.4" fill="none" stroke="#5230a8" stroke-width="1.35"/>
<path d="M42.8 605.5 L47.5 610.0 L42.8 614.5" fill="none" stroke="#5230a8" stroke-width="1.35"/>
<g transform="translate(0.00 0.00)" fill="none" stroke="#1a9a2a" stroke-width="1.35" stroke-linecap="round"><path d="M41.7 365.5 A5 5 0 0 1 38.7 357.4"/><path d="M43.4 355.5 A5 5 0 0 1 46.3 363.5"/><path d="M40 360.5 L41.6 362.2 L44.7 359.1" stroke-width="1.3"/></g><polygon points="37.10,355.00 41.20,354.90 40.90,358.70" fill="#1a9a2a"/><polygon points="44.10,362.20 44.10,366.00 48.00,366.00" fill="#1a9a2a"/>
<g transform="translate(0.00 113.00)" fill="none" stroke="#1a9a2a" stroke-width="1.35" stroke-linecap="round"><path d="M41.7 365.5 A5 5 0 0 1 38.7 357.4"/><path d="M43.4 355.5 A5 5 0 0 1 46.3 363.5"/><path d="M40 360.5 L41.6 362.2 L44.7 359.1" stroke-width="1.3"/></g><polygon points="37.10,468.00 41.20,467.90 40.90,471.70" fill="#1a9a2a"/><polygon points="44.10,475.20 44.10,479.00 48.00,479.00" fill="#1a9a2a"/>
<g transform="translate(0.00 207.00)" fill="none" stroke="#1a9a2a" stroke-width="1.35" stroke-linecap="round"><path d="M41.7 365.5 A5 5 0 0 1 38.7 357.4"/><path d="M43.4 355.5 A5 5 0 0 1 46.3 363.5"/><path d="M40 360.5 L41.6 362.2 L44.7 359.1" stroke-width="1.3"/></g><polygon points="37.10,562.00 41.20,561.90 40.90,565.70" fill="#1a9a2a"/><polygon points="44.10,569.20 44.10,573.00 48.00,573.00" fill="#1a9a2a"/>
<rect x="56" y="910.4" width="12.2" height="13" rx="0.6" fill="#fff" stroke="#b5b5b5" stroke-width="0.8"/>
<rect x="55.6" y="910" width="13" height="2" fill="#6a46b8"/>
<path d="M57.6 916 H66.6 V919 H57.6 Z M63.4 916 V919 M57.6 921.4 H66.6" fill="none" stroke="#c4c4c4" stroke-width="0.8"/>
<path d="M167.4 912.3 L176.6 921.5 M176.6 912.3 L167.4 921.5" fill="none" stroke="#1a1a1a" stroke-width="1.8"/>
<rect x="566" y="32" width="113" height="28" fill="none" stroke="#e8000f" stroke-width="3"/>
<rect x="715" y="64" width="135" height="94" fill="none" stroke="#e8000f" stroke-width="3"/>
<path d="M445.7 16 L548 39.5" fill="none" stroke="#e8000f" stroke-width="3"/>
<path d="M545.7 31 L565.6 43 L542 46.2 Z" fill="#e8000f"/>
<path d="M677 44.6 L696 53" fill="none" stroke="#e8000f" stroke-width="3"/>
<path d="M697.7 45 L713.8 62 L689 59 Z" fill="#e8000f"/>
</svg>
</body></html>
